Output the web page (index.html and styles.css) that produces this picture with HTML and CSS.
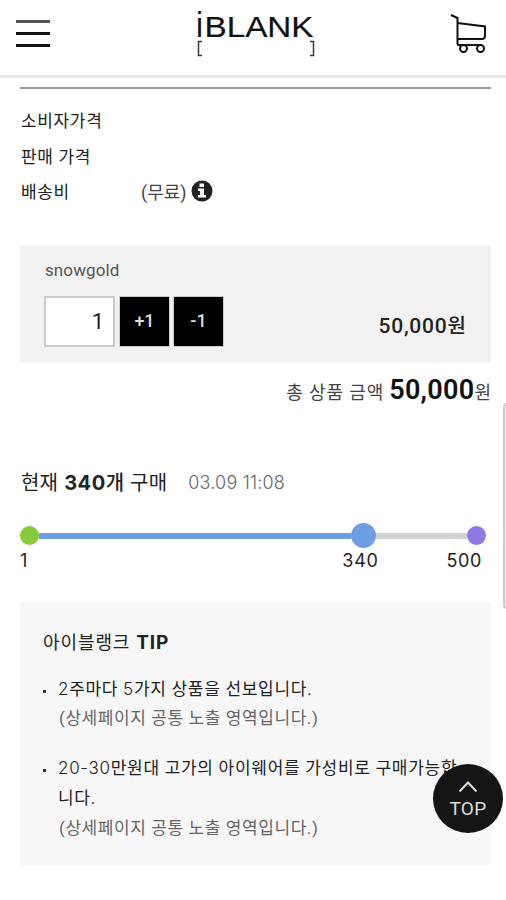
FILE: index.html
```html
<!DOCTYPE html>
<html lang="ko">
<head>
<meta charset="utf-8">
<meta name="viewport" content="width=device-width, initial-scale=1">
<title>iBLANK</title>
<link rel="stylesheet" href="styles.css">
</head>
<body>
<header class="header">
  <button class="menu" aria-label="menu"><span></span><span></span><span></span></button>
  <svg class="logo" width="120" height="50" viewBox="0 0 120 50">
    <text class="logo-i" x="0" y="28" textLength="7" lengthAdjust="spacingAndGlyphs">i</text>
    <text class="logo-name" x="8.500" y="28" textLength="109" lengthAdjust="spacingAndGlyphs">BLANK</text>
    <path d="M6 32.500H2.500V46.500H6M114 32.500H117.500V46.500H114"/>
  </svg>
  <svg class="cart" width="38" height="42" viewBox="0 0 38 42">
    <path d="M2 3L8.500 6V31.500Q8.500 33 10 33H33M8.500 11L36 14.500V23.500Q36 27 33 27H8.500"/>
    <circle cx="14.500" cy="36.500" r="3.500"/><circle cx="31.500" cy="36.500" r="3.500"/>
  </svg>
</header>
<main class="page">
  <dl class="info">
    <div class="info-row"><dt>소비자가격</dt></div>
    <div class="info-row"><dt>판매 가격</dt></div>
    <div class="info-row"><dt>배송비</dt><dd>(무료)
      <svg class="info-icon" width="22" height="22" viewBox="0 0 22 22"><circle cx="11" cy="11" r="10.500"/><path d="M8.500 3.500h4.500v3.500h-4.500zM7 8.500h6v6.500h2v2.500h-8v-2.500h2v-4h-2z"/></svg></dd></div>
  </dl>
  <section class="option">
    <div class="option-name">snowgold</div>
    <div class="option-row">
      <span class="qty">1</span><button class="step">+1</button><button class="step">-1</button>
      <strong class="price">50,000<span>원</span></strong>
    </div>
  </section>
  <div class="total"><span class="total-label">총 상품 금액</span><strong>50,000</strong><span class="won">원</span></div>
  <section class="status">
    <h2 class="status-title"><span>현재</span> <b>340<i>개</i></b> <span>구매</span><time>03.09 11:08</time></h2>
    <div class="track"><i class="dot start"></i><i class="bar done"></i><i class="dot now"></i><i class="bar rest"></i><i class="dot end"></i></div>
    <div class="marks"><span>1</span><span class="mark-now">340</span><span class="mark-end">500</span></div>
  </section>
  <section class="tip">
    <h3>아이블랭크 <b>TIP</b></h3>
    <ul>
      <li><span class="line"><em>2</em>주마다 <em>5</em>가지 상품을 선보입니다.</span><small class="line">(상세페이지 공통 노출 영역입니다.)</small></li>
      <li><span class="line"><em>20-30</em>만원대 고가의 아이웨어를 가성비로 구매가능합</span><span class="line">니다.</span><small class="line">(상세페이지 공통 노출 영역입니다.)</small></li>
    </ul>
  </section>
</main>
<div class="scrollbar"></div>
<a class="top" href="#"><svg width="20" height="13" viewBox="0 0 20 13"><path d="M1.500 11.500L10 2.500L18.500 11.500"/></svg>TOP</a>
</body>
</html>
```
FILE: styles.css
```css
* { box-sizing: border-box; }
body { margin: 0; height: 900px; overflow: hidden; position: relative; background: #fff; color: #222; font-family: Roboto, "Noto Sans CJK KR", sans-serif; }
button { border: 0; padding: 0; font-family: inherit; }
i, em { font-style: normal; }

.header { height: 78px; border-bottom: 3px solid #e7e7e7; display: flex; align-items: flex-start; justify-content: space-between; padding: 9px 19px 0 16px; }
.menu { width: 34px; margin-top: 11px; background: none; display: flex; flex-direction: column; gap: 9px; }
.menu span { height: 3px; background: #111; }
.menu span:first-child { background: #555; }
.logo { margin-left: 12px; overflow: visible; }
.logo text { font-family: "Liberation Sans", sans-serif; fill: #111; }
.logo-i { font-size: 35px; }
.logo-name { font-size: 30px; stroke: #111; stroke-width: .2px; }
.logo path { fill: none; stroke: #4a3438; stroke-width: 1.5; }
.cart { margin-top: 3px; fill: none; stroke: #111; stroke-width: 2; }

.page { padding: 9px 15px 0 20px; }
.info { margin: 0; width: 471px; border-top: 2px solid #999; padding-top: 13px; }
.info-row { display: flex; height: 35.500px; align-items: center; font-size: 17px; letter-spacing: .65px; }
dt { width: 121px; padding-left: 1px; }
dd { margin: 0; display: flex; align-items: center; gap: 4px; letter-spacing: 0; font-size: 18px; color: #444; }
.info-icon circle { fill: #222; }
.info-icon path { fill: #fff; }

.option { width: 471px; height: 118px; margin-top: 36px; background: #f2f2f2; padding: 14px 25px 0 24px; }
.option-name { font-size: 17px; line-height: 22px; color: #555; letter-spacing: .1px; padding-left: 1px; }
.option-row { display: flex; height: 51px; margin-top: 15px; }
.qty { width: 71px; border: 2px solid #ccc; background: #fff; text-align: right; padding-right: 9px; font-size: 22px; line-height: 47px; }
.step { width: 51px; margin-left: 4px; border: 1px solid #ccc; background: #000; color: #ddd; font-size: 18px; font-weight: 500; padding-bottom: 2px; }
.step + .step { margin-left: 3px; }
.price { margin-left: auto; padding-top: 17px; font-size: 21px; line-height: 26px; font-weight: 500; letter-spacing: .8px; }
.price span { font-size: 20px; letter-spacing: 0; }

.total { width: 471px; height: 54px; display: flex; align-items: baseline; justify-content: flex-end; line-height: 54px; font-size: 18px; color: #444; }
.total-label { letter-spacing: .9px; }
.total strong { margin-left: 5px; font-size: 27px; font-weight: 600; color: #111; letter-spacing: .3px; }
.won { font-size: 18px; }

.status { padding-top: 49px; }
.status-title { margin: 0; display: flex; align-items: center; gap: 6px; height: 34px; font: 400 20px/34px Inter, "Noto Sans CJK KR", sans-serif; padding-left: 1px; letter-spacing: .2px; }
.status-title b { font-weight: 700; letter-spacing: .5px; }
.status-title b i { font-weight: 500; letter-spacing: 0; }
.status-title time { margin-left: 15px; font-size: 18px; font-weight: 300; color: #666; }
.track { display: flex; align-items: center; height: 26px; margin-top: 23px; }
.dot { width: 19px; height: 19px; border-radius: 50%; }
.start { background: #87ca3c; }
.now { width: 25px; height: 25px; background: #6d9de2; }
.end { background: #8f78df; }
.bar { height: 6px; }
.done { width: 312px; background: #6d9de2; }
.rest { width: 91px; background: #d2d2d2; }
.marks { display: flex; height: 22px; padding-top: 1px; font: 400 18px/22px Inter, sans-serif; }
.mark-now { margin-left: 315px; letter-spacing: .7px; }
.mark-end { margin-left: 68px; letter-spacing: .6px; }

.tip { width: 471px; height: 263px; margin-top: 31px; background: #f7f7f7; padding: 24px 23px 0; }
.tip h3 { margin: 0; font: 400 18px/34px Inter, "Noto Sans CJK KR", sans-serif; letter-spacing: .9px; }
.tip h3 b { font-weight: 700; font-size: 19px; }
.tip ul { list-style: none; margin: 15px 0 0; padding: 0 0 0 15px; }
.tip li { position: relative; margin-bottom: 20px; }
.tip li::before { content: ""; position: absolute; left: -15px; top: 15px; width: 3px; height: 3px; background: #333; }
.line { display: block; white-space: nowrap; height: 29.800px; line-height: 29.800px; font-size: 17px; letter-spacing: .7px; }
.line em { font-family: Inter, sans-serif; font-weight: 300; }
small.line { color: #666; padding-left: 1px; letter-spacing: .58px; }

.scrollbar { position: absolute; left: 503px; top: 403px; width: 8px; height: 206px; border: 2px solid #ccc; border-radius: 4px; background: #eee; }
.top { position: absolute; left: 433px; top: 764px; width: 70px; height: 69px; border-radius: 50%; background: #151515; color: #ddd; text-decoration: none; display: flex; flex-direction: column; align-items: center; padding-top: 16px; font-size: 19px; line-height: 32px; letter-spacing: .3px; }
.top svg { fill: none; stroke: #ddd; stroke-width: 2; flex: none; }
```
